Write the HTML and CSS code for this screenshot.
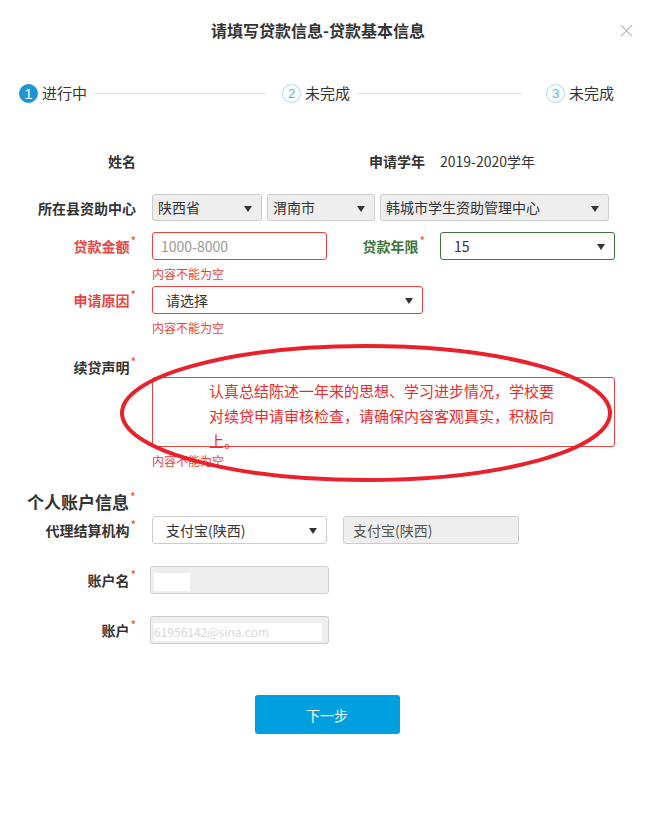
FILE: index.html
```html
<!DOCTYPE html>
<html lang="zh-CN">
<head>
  <meta charset="UTF-8" />
  <meta name="viewport" content="width=device-width, initial-scale=1.0"/>
  <title>贷款基本信息</title>
  <link rel="stylesheet" href="styles.css">
</head>
<body>
  <div class="modal">
    <div class="modal-header">
      <span></span>
      <h3 class="modal-title">请填写贷款信息-贷款基本信息</h3>
      <span class="close">×</span>
    </div>

    <div class="steps">
      <div class="step active"><span class="num">1</span>进行中</div>
      <div class="step-line line-1"></div>
      <div class="step"><span class="num">2</span>未完成</div>
      <div class="step-line line-2"></div>
      <div class="step"><span class="num">3</span>未完成</div>
    </div>

    <div class="form">
      <div class="row row-name">
        <div class="label">姓名</div>
        <div class="blank"></div>
        <div class="label label2">申请学年</div>
        <div class="value">2019-2020学年</div>
      </div>

      <div class="row row-center">
        <div class="label">所在县资助中心</div>
        <div class="select gray s-prov">陕西省<i class="caret"></i></div>
        <div class="select gray s-city">渭南市<i class="caret"></i></div>
        <div class="select gray s-center">韩城市学生资助管理中心<i class="caret"></i></div>
      </div>

      <div class="row row-amount">
        <div class="label error">贷款金额<sup>*</sup></div>
        <div class="input invalid placeholder">1000-8000</div>
        <div class="label label2 success">贷款年限<sup>*</sup></div>
        <div class="select valid pad">15<i class="caret"></i></div>
      </div>
      <div class="help">内容不能为空</div>

      <div class="row row-reason">
        <div class="label error">申请原因<sup>*</sup></div>
        <div class="select invalid pad s-reason">请选择<i class="caret"></i></div>
      </div>
      <div class="help">内容不能为空</div>

      <div class="row row-statement">
        <div class="label">续贷声明<sup>*</sup></div>
        <div class="textarea invalid">认真总结陈述一年来的思想、学习进步情况，学校要对续贷申请审核检查，请确保内容客观真实，积极向上。</div>
      </div>
      <div class="help">内容不能为空</div>

      <h4 class="section-title">个人账户信息<sup>*</sup></h4>

      <div class="row row-agent">
        <div class="label">代理结算机构<sup>*</sup></div>
        <div class="select pad">支付宝(陕西)<i class="caret"></i></div>
        <div class="input disabled agent-name">支付宝(陕西)</div>
      </div>

      <div class="row row-account">
        <div class="label">账户名<sup>*</sup></div>
        <div class="input disabled account"><span class="masked short">张某</span></div>
      </div>

      <div class="row row-account">
        <div class="label">账户<sup>*</sup></div>
        <div class="input disabled account"><span class="masked long">61956142@sina.com</span></div>
      </div>

      <div class="actions">
        <button class="btn-next">下一步</button>
      </div>
    </div>

    <svg class="annotation" width="500" height="144" viewBox="0 0 500 144">
      <ellipse cx="248" cy="70" rx="244" ry="67" fill="none" stroke="#e8212a" stroke-width="4"/>
    </svg>
  </div>
</body>
</html>
```

FILE: styles.css
```css
:root {
  --text: #333;
  --red: #e8433f;
  --green: #3c763d;
  --blue: #009fe0;
  --border: #ccc;
  --gray-bg: #eee;
}

body {
  margin: 0;
  background: #fff;
  color: var(--text);
  font-family: "Microsoft YaHei", "Noto Sans CJK SC", sans-serif;
  font-size: 14px;
}

.modal {
  position: relative;
  width: 654px;
  height: 828px;
}

/* header */
.modal-header {
  display: grid;
  grid-template-columns: 1fr auto 1fr;
  align-items: center;
  height: 60px;
  padding-right: 18px;
}

.modal-title {
  margin: 0;
  font-size: 16px;
  font-weight: bold;
  line-height: 24px;
  color: #333;
}

.close {
  justify-self: end;
  font-size: 23px;
  line-height: 22px;
  color: #bbb;
  font-family: "DejaVu Sans", sans-serif;
  font-weight: 300;
}

/* steps */
.steps {
  display: flex;
  align-items: center;
  height: 20px;
  margin-top: 23px;
  padding-left: 19px;
}

.step {
  display: flex;
  align-items: center;
  gap: 4px;
  line-height: 20px;
  color: #333;
  font-size: 15px;
}

.num {
  width: 17px;
  height: 17px;
  border: 1.5px solid #a8d8f2;
  border-radius: 50%;
  color: #56b3e6;
  font-size: 13px;
  line-height: 17px;
  text-align: center;
  font-family: "Liberation Sans", sans-serif;
}

.step.active .num {
  background: #1b95d5;
  border-color: #1b95d5;
  color: #fff;
  font-size: 15px;
}

.step-line {
  height: 1px;
  background: #e3e3e3;
}

.line-1 {
  width: 172px;
  margin: 0 16px 0 7px;
}

.line-2 {
  width: 165px;
  margin: 0 24px 0 7px;
}

/* form */
.row {
  display: flex;
  align-items: center;
}

.label {
  width: 136px;
  flex-shrink: 0;
  margin-right: 16px;
  text-align: right;
  font-weight: bold;
  line-height: 24px;
  color: #333;
  white-space: nowrap;
}

.label sup,
.section-title sup {
  color: #f04a2c;
  font-size: 12px;
  line-height: 0;
  font-weight: normal;
  margin-left: 1px;
}

.label.label2 {
  width: 98px;
  margin-right: 15px;
}

.label.error {
  color: var(--red);
}

.label.success {
  color: var(--green);
}

.blank {
  width: 175px;
}

.value {
  line-height: 24px;
}

.row-name {
  margin-top: 46px;
}

.row-center {
  margin-top: 21px;
}

.row-amount {
  margin-top: 11px;
}

.select,
.input {
  position: relative;
  box-sizing: border-box;
  height: 28px;
  width: 175px;
  border: 1px solid var(--border);
  border-radius: 3px;
  background: #fff;
  padding: 0 24px 0 8px;
  line-height: 26px;
  color: #333;
  white-space: nowrap;
  overflow: hidden;
}

.select.pad {
  padding-left: 13px;
}

.select.gray {
  background: var(--gray-bg);
  height: 27px;
  line-height: 25px;
  padding-left: 5px;
  margin-right: 5px;
}

.s-prov { width: 110px; }
.s-city { width: 108px; }
.s-center { width: 229px; }
.s-reason { width: 271px; }

.caret {
  position: absolute;
  right: 9px;
  top: 11px;
  border-left: 4px solid transparent;
  border-right: 4px solid transparent;
  border-top: 6px solid #333;
}

.invalid {
  border-color: var(--red);
}

.valid {
  border-color: var(--green);
}

.placeholder {
  color: #999;
}

.help {
  margin: 6px 0 4px 152px;
  color: var(--red);
  font-size: 12px;
  line-height: 16px;
}

.row-statement {
  align-items: flex-start;
  margin-top: 21px;
}

.row-statement .label {
  line-height: 20px;
}

.textarea {
  box-sizing: border-box;
  width: 463px;
  height: 70px;
  margin-top: 20px;
  padding: 0 57px 0 56px;
  border: 1px solid var(--red);
  border-radius: 3px;
  color: #f0282a;
  font-size: 15px;
  line-height: 25px;
}

.section-title {
  margin: 21px 0 0 27px;
  font-size: 17px;
  font-weight: bold;
  line-height: 24px;
  color: #333;
}

.row-agent {
  margin-top: 2px;
}

.disabled {
  background: var(--gray-bg);
  color: #555;
  padding-left: 9px;
}

.agent-name {
  width: 176px;
  margin-left: 16px;
}

.row-account {
  margin-top: 22px;
}

.account {
  width: 179px;
  margin-left: -2px;
  padding-left: 3px;
}

.masked {
  display: inline-block;
  height: 18px;
  line-height: 18px;
  vertical-align: middle;
  background: #fff;
  color: #d8d8d8;
  overflow: hidden;
}

.masked.short {
  width: 36px;
  color: #fff;
}

.masked.long {
  width: 168px;
  font-size: 12px;
}

.actions {
  display: flex;
  justify-content: center;
  margin-top: 51px;
}

.btn-next {
  width: 145px;
  height: 39px;
  border: none;
  border-radius: 3px;
  background: var(--blue);
  color: #fff;
  font-family: inherit;
  font-size: 14px;
  cursor: pointer;
}

.annotation {
  position: absolute;
  left: 118px;
  top: 343px;
}
```
